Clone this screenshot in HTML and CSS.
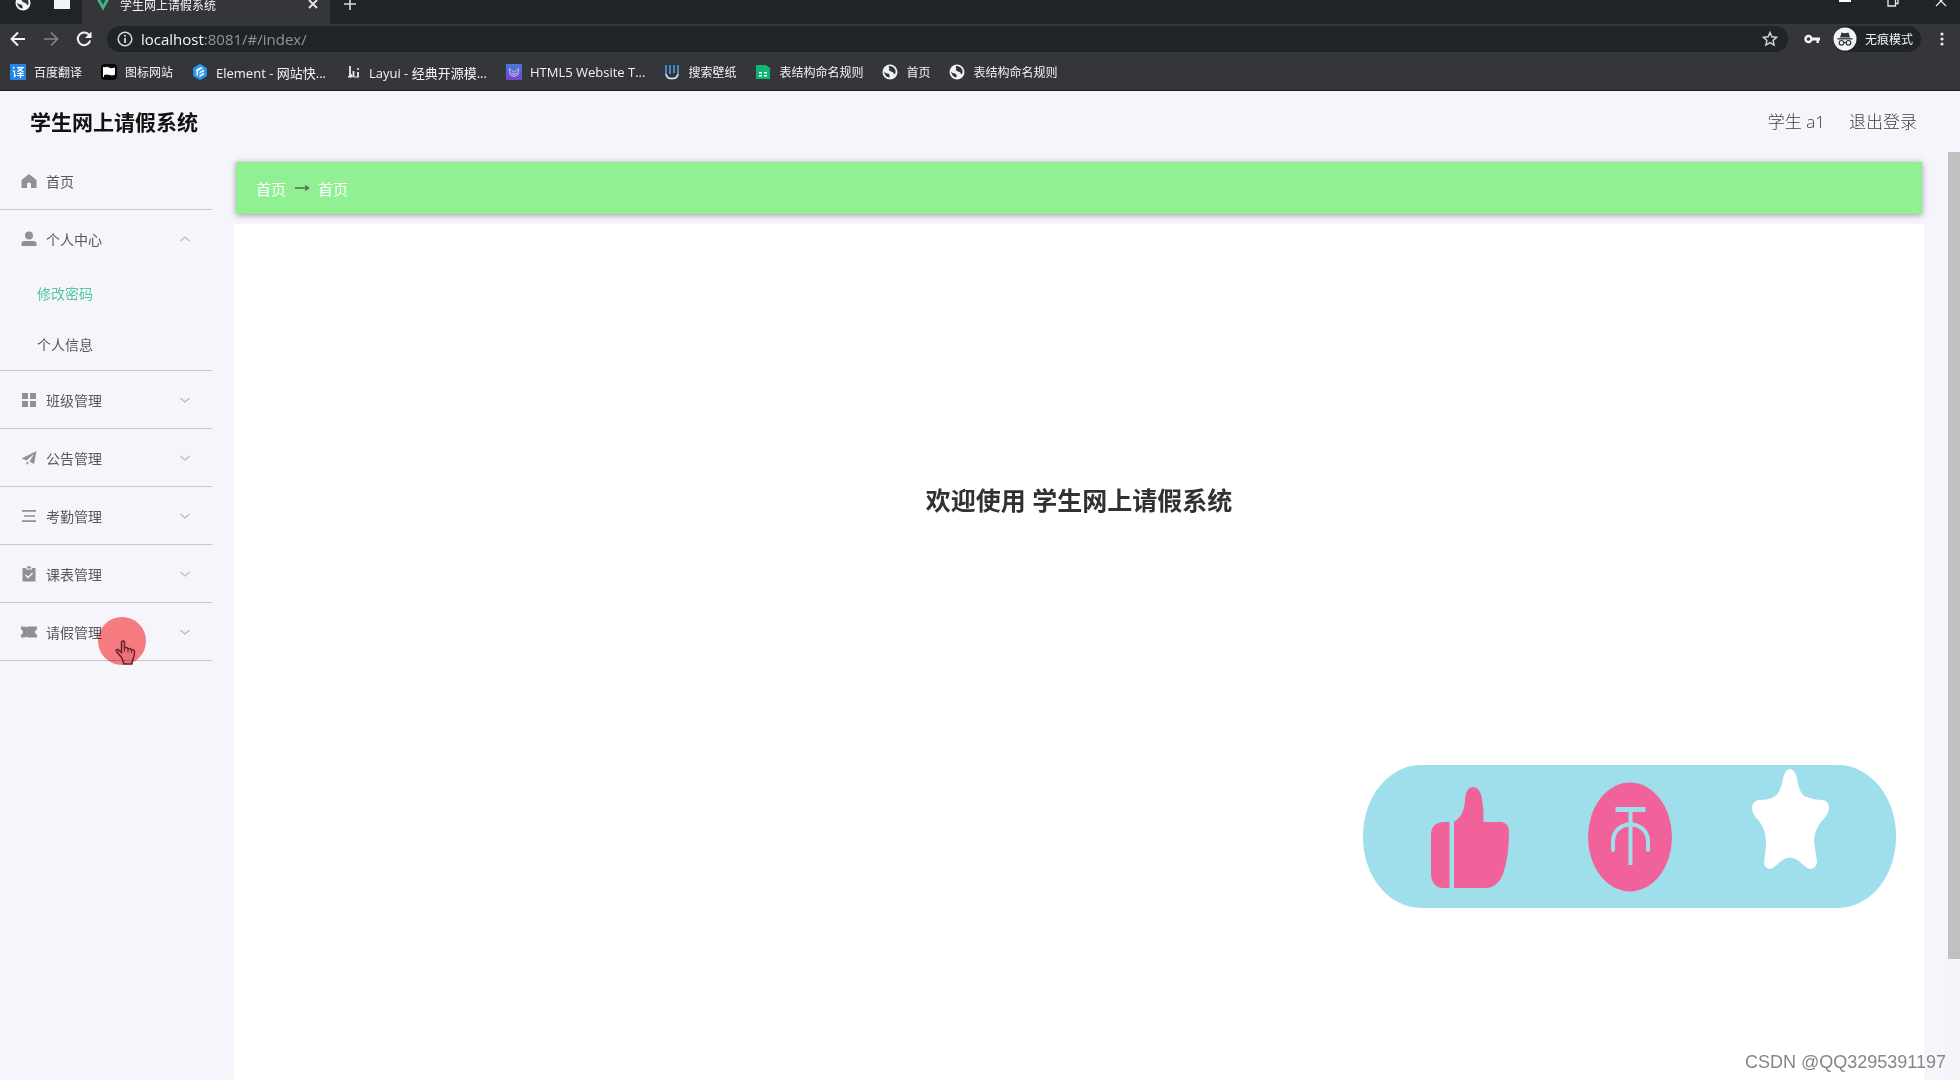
FILE: index.html
```html
<!DOCTYPE html>
<html lang="zh-CN">
<head>
<meta charset="utf-8">
<title>学生网上请假系统</title>
<link rel="stylesheet" href="styles.css">
</head>
<body>
<svg class="defs" aria-hidden="true">
  <symbol id="globe" viewBox="0 0 16 16"><circle cx="8" cy="8" r="7.5" fill="#f1f3f4"/><path d="M2 7.500Q4 10 6 9.500Q8 10 7.500 13.500Q3 13 2 7.500ZM6.500 2.200Q8 5 6.500 6L9 7.500Q12 8 12 10.500L13.500 9Q14 5 11 3Q8 1.500 6.500 2.200Z" fill="#303338"/></symbol>
  <symbol id="chevron" viewBox="0 0 12 8"><path d="M1.500 2L6 6L10.500 2" fill="none" stroke="#b9bbc1" stroke-width="1.200"/></symbol>
</svg>

<div class="browser">
  <div class="tabstrip">
    <div class="pinned">
      <svg class="ico16"><use href="#globe"/></svg>
      <svg class="ico16" viewBox="0 0 16 16"><path d="M0 2h6l2 2h8v10H0z" fill="#f1f3f4"/></svg>
    </div>
    <div class="tab">
      <svg class="ico16" viewBox="0 0 16 16"><path d="M1 2h3.500L8 8.500L11.500 2H15L8 14.500z" fill="#41b883"/><path d="M4.500 2H7l1 2l1-2h2.500L8 8.500z" fill="#35495e"/></svg>
      <span class="tab-title">学生网上请假系统</span>
      <button class="plain" aria-label="关闭标签页"><svg class="ico12" viewBox="0 0 12 12"><path d="M2 2l8 8M10 2l-8 8" stroke="#e8eaed" stroke-width="1.800"/></svg></button>
    </div>
    <button class="plain new-tab" aria-label="新标签页"><svg class="ico12" viewBox="0 0 12 12"><path d="M6 0v12M0 6h12" stroke="#d5d8db" stroke-width="1.600"/></svg></button>
    <div class="window-controls">
      <button class="plain" aria-label="最小化"><svg class="ico12" viewBox="0 0 12 12"><path d="M0 6h12" stroke="#fff" stroke-width="2"/></svg></button>
      <button class="plain" aria-label="还原"><svg class="ico12" viewBox="0 0 12 12"><path d="M1 3.500h7.500V11H1zM3.500 3V1H11v7.500H9" fill="none" stroke="#e8eaed" stroke-width="1.300"/></svg></button>
      <button class="plain" aria-label="关闭"><svg class="ico12" viewBox="0 0 12 12"><path d="M1 1l10 10M11 1L1 11" stroke="#e8eaed" stroke-width="1.300"/></svg></button>
    </div>
  </div>

  <div class="toolbar">
    <button class="plain" aria-label="后退"><svg class="ico16" viewBox="0 0 16 16"><path d="M15 8H2M8 1.500L1.500 8L8 14.500" fill="none" stroke="#f1f3f4" stroke-width="2"/></svg></button>
    <button class="plain" aria-label="前进"><svg class="ico16" viewBox="0 0 16 16"><path d="M1 8h13M8 1.500L14.500 8L8 14.500" fill="none" stroke="#85888b" stroke-width="1.600"/></svg></button>
    <button class="plain" aria-label="重新加载"><svg class="ico16" viewBox="0 0 16 16"><path d="M13.500 4.500A6.300 6.300 0 1 0 14.200 9.500" fill="none" stroke="#f1f3f4" stroke-width="2"/><path d="M15.500 .5v6.500H9z" fill="#f1f3f4"/></svg></button>
    <div class="address">
      <svg class="ico16" viewBox="0 0 16 16"><circle cx="8" cy="8" r="6.800" fill="none" stroke="#d5d8db" stroke-width="1.500"/><path d="M8 7v5M8 4v1.700" stroke="#d5d8db" stroke-width="1.800"/></svg>
      <span class="url"><b>localhost</b>:8081/#/index/</span>
      <svg class="ico16" viewBox="0 0 16 16"><path d="M8 1.500l1.900 4.300 4.700.5-3.500 3.100 1 4.600L8 11.600 3.900 14l1-4.600L1.400 6.300l4.700-.5z" fill="none" stroke="#d5d8db" stroke-width="1.400"/></svg>
    </div>
    <svg class="ico16" viewBox="0 0 16 16"><circle cx="4.500" cy="8" r="3" fill="none" stroke="#f1f3f4" stroke-width="2.400"/><path d="M7.500 6.500H16v3h-1V12h-2.500V9.500h-5z" fill="#f1f3f4"/></svg>
    <div class="incognito">
      <svg class="ico24" viewBox="0 0 24 24"><circle cx="12" cy="12" r="11.500" fill="#f1f3f4"/><path d="M8.500 5.500Q12 7 15.500 5.500L17 10.500H7z" fill="#303338"/><path d="M4.500 11.800h15" stroke="#303338" stroke-width="1.300"/><g fill="none" stroke="#303338" stroke-width="1.200"><circle cx="8.500" cy="15.800" r="2.300"/><circle cx="15.500" cy="15.800" r="2.300"/><path d="M10.800 15.500h2.400"/></g></svg>
      <span>无痕模式</span>
    </div>
    <button class="plain menu" aria-label="菜单"><svg class="ico16" viewBox="0 0 16 16" fill="#e8eaed"><circle cx="8" cy="3" r="1.600"/><circle cx="8" cy="8" r="1.600"/><circle cx="8" cy="13" r="1.600"/></svg></button>
  </div>

  <nav class="bookmarks">
    <a href="#"><svg class="ico16" viewBox="0 0 16 16"><rect width="16" height="16" rx="1" fill="#2487e8"/><g fill="none" stroke="#fff" stroke-width="1.200"><path d="M3 3l1.500 1.500M2.500 7h2v5.500l1.500-1.500M7 3.500h6L7.500 8M8 4.500l5.500 3.500M7.500 9.500h6M7 11.500h7M10.500 8v6"/></g></svg>百度翻译</a>
    <a href="#"><svg class="ico16" viewBox="0 0 16 16"><rect width="16" height="16" rx="4" fill="#070809"/><path d="M2.500 3v10M3 4q2.500-1.500 5 0t5.500 0v6.500q-2.500 1-5 0t-5.500 0z" fill="#fff" stroke="#fff"/></svg>图标网站</a>
    <a href="#" class="mixed"><svg class="ico16" viewBox="0 0 16 16"><path d="M8 0l6.800 4v8L8 16l-6.800-4V4z" fill="#259df4"/><path d="M4.500 5.500L9 3l2 1.200-5 2.800v5L4.500 11zM7.500 8l4.500-2.500v1.700L7.500 9.700zM7.500 11.300L12 8.800v1.700L7.500 13z" fill="#fff"/></svg>Element - 网站快...</a>
    <a href="#" class="mixed"><svg class="ico16" viewBox="0 0 16 16"><path d="M5 2v9.500M8.500 7v6M13 8v5" fill="none" stroke="#e8eaed" stroke-width="1.800"/><path d="M3 13l3-3 1.500 3zM9 13h5" fill="#e8eaed" stroke="#e8eaed"/><circle cx="13" cy="5" r="1" fill="#e8eaed"/></svg>Layui - 经典开源模...</a>
    <a href="#" class="mixed"><svg class="ico16" viewBox="0 0 16 16"><linearGradient id="violet" x2="0" y2="1"><stop stop-color="#4d75dd"/><stop offset="1" stop-color="#7148c7"/></linearGradient><rect width="16" height="16" fill="url(#violet)"/><path d="M3.500 4l.7 6.500L8 12.500l3.800-2 .7-6.500M5 5.500l3 3 3-3M5.500 9L8 10.500 10.500 9" fill="none" stroke="#c9cdfb"/></svg>HTML5 Website T...</a>
    <a href="#"><svg class="ico16" viewBox="0 0 16 16"><path d="M2 1v8q0 5.500 5 5.500h2q5 0 5-5.500V1M6 1v9M10 9V1" fill="none" stroke="#4b9be5" stroke-width="1.600"/><path d="M2 10q1 4.500 5 4.500h2q4 0 5-4.500" fill="none" stroke="#d6e8f5" stroke-width="1.400"/></svg>搜索壁纸</a>
    <a href="#"><svg class="ico16" viewBox="0 0 16 16"><path d="M1 1h10l4 3v11H1z" fill="#10b475"/><path d="M4 8h3v1.500H4zM9 8h3v1.500H9zM4 11h3v1.500H4zM9 11h3v1.500H9z" fill="#fff"/></svg>表结构命名规则</a>
    <a href="#"><svg class="ico16"><use href="#globe"/></svg>首页</a>
    <a href="#"><svg class="ico16"><use href="#globe"/></svg>表结构命名规则</a>
  </nav>
</div>

<header class="header">
  <h1>学生网上请假系统</h1>
  <div class="account"><span>学生 a1</span><a href="#">退出登录</a></div>
</header>

<div class="layout">
  <nav class="sidebar">
    <div class="group">
      <a class="item" href="#"><svg class="ico16" viewBox="0 0 16 16"><path d="M8 1L.5 7v8H6v-4.500q2-2 4 0V15h5.500V7z"/></svg>首页</a>
    </div>
    <div class="group">
      <button class="item"><svg class="ico16" viewBox="0 0 16 16"><circle cx="8" cy="4.500" r="4"/><path d="M.5 15v-2q0-3 3-3h9q3 0 3 3v2z"/></svg>个人中心<svg class="arrow open"><use href="#chevron"/></svg></button>
      <div class="subs">
        <a class="sub active" href="#">修改密码</a>
        <a class="sub" href="#">个人信息</a>
      </div>
    </div>
    <div class="group">
      <button class="item"><svg class="ico16" viewBox="0 0 16 16"><path d="M1 1h6v6H1zM9 1h6v6H9zM1 9h6v6H1zM9 9h6v6H9z"/></svg>班级管理<svg class="arrow"><use href="#chevron"/></svg></button>
    </div>
    <div class="group">
      <button class="item"><svg class="ico16" viewBox="0 0 16 16"><path d="M.5 8.500L15.500 1 13 14 8.500 11.500 13 4 5.500 10.500zM5.500 11.500l2.500 1.200L5.500 15z"/></svg>公告管理<svg class="arrow"><use href="#chevron"/></svg></button>
    </div>
    <div class="group">
      <button class="item"><svg class="ico16" viewBox="0 0 16 16"><path d="M1 2h14v1.700H1zM3 7.200h11v1.600H3zM1 12.300h14V14H1z"/></svg>考勤管理<svg class="arrow"><use href="#chevron"/></svg></button>
    </div>
    <div class="group">
      <button class="item"><svg class="ico16" viewBox="0 0 16 16"><path d="M1.500 2H5v1.500h6V2h3.500v13.500h-13zM6 .5h4v2H6z"/><path d="M4.500 9l2.700 2.500L11.500 7" fill="none" stroke="#f5f5fb" stroke-width="1.400"/></svg>课表管理<svg class="arrow"><use href="#chevron"/></svg></button>
    </div>
    <div class="group">
      <button class="item"><svg class="ico16" viewBox="0 0 16 16"><path d="M0 2.500h4.500l1 1 1-1H16v3q-2 .5-2 2.500t2 2.500v3H6.500l-1-1-1 1H0v-3Q2 10 2 8T0 5.500z"/></svg>请假管理<svg class="arrow"><use href="#chevron"/></svg></button>
    </div>
  </nav>

  <main class="main">
    <nav class="breadcrumb"><a href="#">首页</a><svg class="to" viewBox="0 0 16 8"><path d="M1 4h13M11 1.500L14.500 4L11 6.500" fill="none" stroke="#4c6b50" stroke-width="1.300"/></svg><a href="#">首页</a></nav>
    <section class="content"><h2>欢迎使用 学生网上请假系统</h2></section>
  </main>
  <div class="scrollbar"><div class="thumb"></div></div>
</div>

<svg class="pointer" viewBox="0 0 50 50"><circle cx="25" cy="25" r="24" fill="#ff8083"/><path d="M25 42L19.500 35.500Q18.500 33 21 33.500L24.500 36.500V26Q26 23.500 27.500 26V32Q30 30.500 31 33Q33.500 31.500 34.500 34Q37 33 37.500 35.500Q38 40 35.500 44L35 48H27Z" fill="#f4777b" stroke="#6c2329" stroke-width="1.500"/><path d="M27.500 32v4M31 33v3.500M34.500 34v3" stroke="#6c2329"/></svg>

<div class="actions">
  <button class="plain" aria-label="点赞"><svg viewBox="0 0 84 142"><g fill="#f2629a"><path d="M21.500 56H15Q3 57 3 69V109Q4 121 14 122H21.500Z"/><path d="M26 56Q36 50 37 35Q37 22 45 21Q52 21 54 33Q56 45 55.500 56H73Q81 57 81 66Q81 91 75 108Q70 121 59 122H26Z"/></g></svg></button>
  <button class="plain" aria-label="投币"><svg viewBox="0 0 84 142"><ellipse cx="42" cy="71" rx="42" ry="54.500" fill="#f2629a"/><path d="M27.500 43.500H57.500" fill="none" stroke="#9fdeeb" stroke-width="5"/><path d="M42.500 43V99" stroke="#9fdeeb" stroke-width="4"/><path d="M25 84V75Q26 60 42.500 58Q59 60 60 75V84" fill="none" stroke="#9fdeeb" stroke-width="4" stroke-linecap="round"/></svg></button>
  <button class="plain" aria-label="收藏"><svg viewBox="0 0 84 142"><path d="M42 3Q47 3 49 13Q52 30 59 31Q65 34 75 34Q81 35 81 43Q80 49 73 56Q66 65 66 76Q68 88 69 96Q68 103 62 103Q58 102 51 95Q42 88 33 95Q26 102 22 103Q16 102 16 96Q18 85 18 76Q18 64 11 55Q4 48 4 42Q4 36 10 34Q23 34 27 30Q32 28 35 13Q37 3 42 3Z" fill="#fff"/></svg></button>
</div>
<div class="watermark">CSDN @QQ3295391197</div>
</body>
</html>
```
FILE: styles.css
```css
* { box-sizing: border-box; }
body {
  margin: 0;
  height: 100vh;
  display: flex;
  flex-direction: column;
  overflow: hidden;
  background: #f5f5fb;
  color: #303133;
  font-family: "Open Sans", "Noto Sans CJK SC", sans-serif;
}
a { color: inherit; text-decoration: none; }
button { font: inherit; color: inherit; background: none; border: 0; padding: 0; }
svg { display: block; flex: none; }
.defs { position: absolute; width: 0; height: 0; }
.plain { display: flex; align-items: center; }
.ico12 { width: 12px; height: 12px; }
.ico16 { width: 16px; height: 16px; }
.ico24 { width: 24px; height: 24px; }

/* browser chrome */
.browser {
  flex: none;
  background: #35363a;
  color: #f1f3f4;
  font-size: 12px;
  border-bottom: 1px solid #202124;
}
.tabstrip { display: flex; height: 24px; background: #202428; }
.pinned { display: flex; gap: 23px; padding: 0 12px 0 15px; align-items: flex-start; }
.pinned svg { margin-top: -5px; }
.tab {
  display: flex;
  align-items: flex-start;
  width: 248px;
  padding: 0 11px 0 13px;
  gap: 9px;
  background: #35363a;
}
.tab > svg { margin-top: -4px; }
.tab-title { flex: 1; line-height: 12px; }
.tab .plain { margin-top: -2px; }
.new-tab { align-self: flex-start; margin: -2px 0 0 14px; }
.window-controls { display: flex; gap: 36px; margin: -5px 13px 0 auto; align-items: flex-start; }
.toolbar { display: flex; align-items: center; gap: 17px; height: 30px; padding: 0 10px; }
.address {
  flex: 1;
  display: flex;
  align-items: center;
  gap: 8px;
  height: 26px;
  margin: 0 -1px 0 -2px;
  padding: 0 10px;
  border-radius: 13px;
  background: #202428;
}
.url { flex: 1; font-size: 15px; line-height: 20px; color: #92969a; }
.url b { font-weight: 400; color: #f1f3f4; }
.incognito {
  display: flex;
  align-items: center;
  gap: 8px;
  height: 26px;
  margin-left: -4px;
  padding-right: 8px;
  border-radius: 13px;
  background: #202428;
}
.menu { margin-left: -4px; }
.bookmarks { display: flex; align-items: center; gap: 19px; height: 36px; padding: 0 10px; }
.bookmarks a { display: flex; align-items: center; gap: 8px; white-space: nowrap; }
.bookmarks .mixed { font-size: 13px; }

/* page */
.header {
  flex: none;
  display: flex;
  align-items: center;
  justify-content: space-between;
  height: 61px;
  padding: 0 43px 0 30px;
}
.header h1 { margin: 0; font-size: 21px; line-height: 32px; color: #111; }
.account { display: flex; gap: 24px; font-size: 17px; line-height: 24px; color: #3c3d42; font-weight: 300; }
.layout { flex: 1; min-height: 0; display: flex; }
.sidebar { width: 212px; flex: none; font-size: 14px; color: #56585d; }
.group { border-bottom: 1px solid #c6c6cb; }
.item {
  display: flex;
  align-items: center;
  gap: 9px;
  width: 100%;
  height: 57px;
  padding: 0 21px;
}
.item .ico16 { fill: #8f9196; }
.arrow { width: 12px; height: 8px; margin-left: auto; }
.arrow.open { transform: rotate(180deg); }
.subs { padding-bottom: 1px; }
.sub { display: flex; align-items: center; height: 51px; padding-left: 37px; }
.active { color: #53c6a5; }
.main { flex: 1; display: flex; flex-direction: column; margin: 10px 24px 0 22px; }
.breadcrumb {
  flex: none;
  display: flex;
  align-items: center;
  gap: 8px;
  height: 52px;
  margin: 0 2px;
  padding: 0 20px;
  background: #90f093;
  box-shadow: 0 1px 6px rgba(70, 60, 90, .5);
  color: #fff;
  font-size: 15px;
}
.to { width: 16px; height: 8px; }
.content { flex: 1; margin-top: 10px; background: #fff; text-align: center; }
.content h2 { margin: 258px 0 0; font-size: 25px; line-height: 36px; }
.scrollbar { width: 12px; background: #f5f4f8; }
.thumb { height: 87%; background: #c1c0c1; }

/* overlays */
.pointer { position: absolute; left: 97px; top: 616px; width: 50px; height: 50px; mix-blend-mode: multiply; }
.actions {
  position: fixed;
  right: 64px;
  bottom: 172px;
  display: flex;
  justify-content: center;
  gap: 76px;
  width: 533px;
  height: 143px;
  border-radius: 58px / 71px;
  background: #9fdeeb;
}
.actions svg { width: 84px; height: 142px; }
.watermark {
  position: fixed;
  right: 14px;
  bottom: 6px;
  font-family: "Liberation Sans", sans-serif;
  font-size: 18px;
  line-height: 24px;
  color: #85858a;
}
```
